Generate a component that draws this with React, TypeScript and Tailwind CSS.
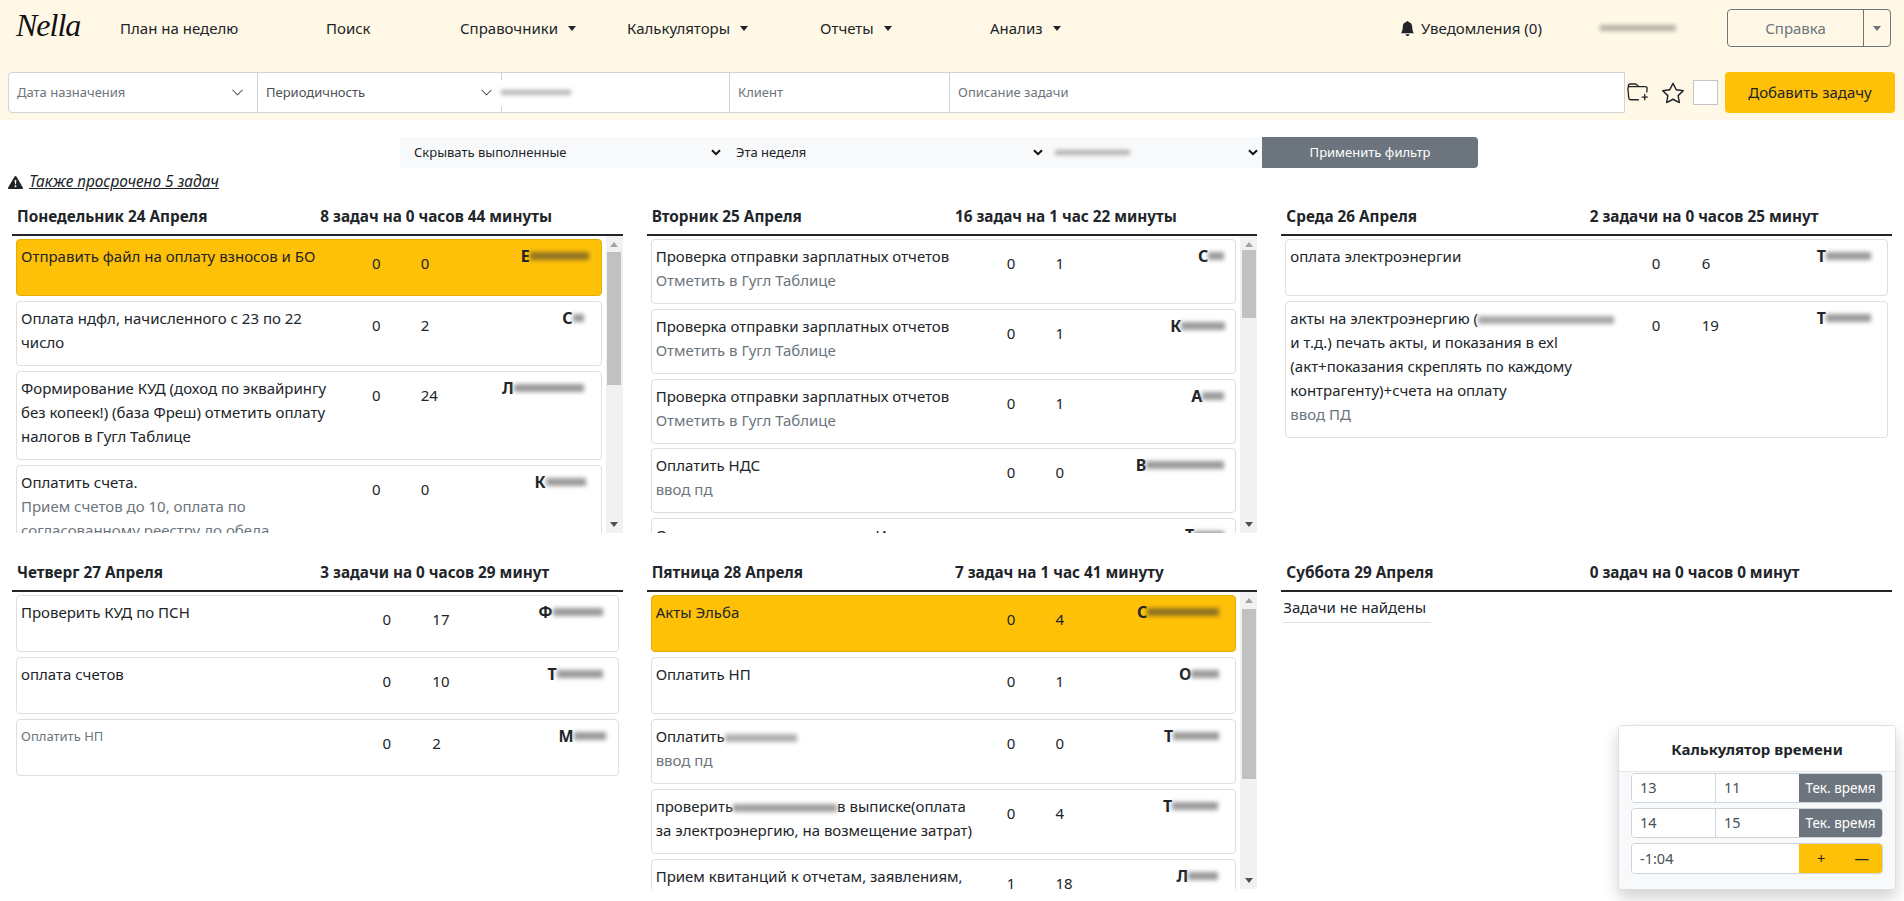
import React from "react";
import { BsBellFill, BsChevronDown, BsExclamationTriangleFill, BsFolderPlus, BsStar } from "react-icons/bs";

function Blur({ w, tone = "#8a8a8a", h = 8 }: { w: number; tone?: string; h?: number }) {
  return (
    <span className="inline-block align-middle blur-[2px]" style={{ width: w, height: h, backgroundColor: tone }} />
  );
}

type Who = { l: string; w: number; pr: number };
type Task = {
  id: string;
  title: React.ReactNode;
  sub?: string;
  a: string;
  b: string;
  who: Who;
  hot?: boolean;
  small?: boolean;
};
type Day = { name: string; stat: string; tasks: Task[]; thumb?: [number, number]; empty?: boolean };

const check = (id: string, l: string, w: number, pr: number): Task => ({
  id,
  title: "Проверка отправки зарплатных отчетов",
  sub: "Отметить в Гугл Таблице",
  a: "0",
  b: "1",
  who: { l, w, pr },
});

const days: Day[] = [
  {
    name: "Понедельник 24 Апреля",
    stat: "8 задач на 0 часов 44 минуты",
    thumb: [16, 133],
    tasks: [
      { id: "m1", title: "Отправить файл на оплату взносов и БО", a: "0", b: "0", who: { l: "Е", w: 59, pr: 7 }, hot: true },
      { id: "m2", title: "Оплата ндфл, начисленного с 23 по 22 число", a: "0", b: "2", who: { l: "С", w: 11, pr: 12 } },
      { id: "m3", title: "Формирование КУД (доход по эквайрингу без копеек!) (база Фреш) отметить оплату налогов в Гугл Таблице", a: "0", b: "24", who: { l: "Л", w: 70, pr: 12 } },
      { id: "m4", title: "Оплатить счета.", sub: "Прием счетов до 10, оплата по согласованному реестру до обеда", a: "0", b: "0", who: { l: "К", w: 40, pr: 10 } },
    ],
  },
  {
    name: "Вторник 25 Апреля",
    stat: "16 задач на 1 час 22 минуты",
    thumb: [14, 68],
    tasks: [
      check("t1", "С", 16, 6),
      check("t2", "К", 44, 5),
      check("t3", "А", 22, 6),
      { id: "t4", title: "Оплатить НДС", sub: "ввод пд", a: "0", b: "0", who: { l: "В", w: 78, pr: 6 } },
      { id: "t5", title: "Оплатить счета поставщикам Ип", a: "0", b: "0", who: { l: "Т", w: 30, pr: 6 } },
    ],
  },
  {
    name: "Среда 26 Апреля",
    stat: "2 задачи на 0 часов 25 минут",
    tasks: [
      { id: "w1", title: "оплата электроэнергии", a: "0", b: "6", who: { l: "Т", w: 45, pr: 11 } },
      {
        id: "w2",
        title: (
          <>
            акты на электроэнергию (<Blur w={136} tone="#a8a8a8" />
            <br />и т.д.) печать акты, и показания в exl (акт+показания скреплять по каждому контрагенту)+счета на оплату
          </>
        ),
        sub: "ввод ПД",
        a: "0",
        b: "19",
        who: { l: "Т", w: 45, pr: 11 },
      },
    ],
  },
  {
    name: "Четверг 27 Апреля",
    stat: "3 задачи на 0 часов 29 минут",
    tasks: [
      { id: "h1", title: "Проверить КУД по ПСН", a: "0", b: "17", who: { l: "Ф", w: 50, pr: 10 } },
      { id: "h2", title: "оплата счетов", a: "0", b: "10", who: { l: "Т", w: 46, pr: 10 } },
      { id: "h3", title: "Оплатить НП", a: "0", b: "2", who: { l: "М", w: 32, pr: 7 }, small: true },
    ],
  },
  {
    name: "Пятница 28 Апреля",
    stat: "7 задач на 1 час 41 минуту",
    thumb: [17, 170],
    tasks: [
      { id: "f1", title: "Акты Эльба", a: "0", b: "4", who: { l: "С", w: 72, pr: 11 }, hot: true },
      { id: "f2", title: "Оплатить НП", a: "0", b: "1", who: { l: "О", w: 28, pr: 11 } },
      {
        id: "f3",
        title: (
          <>
            Оплатить
            <Blur w={72} tone="#b0b0b0" />
          </>
        ),
        sub: "ввод пд",
        a: "0",
        b: "0",
        who: { l: "Т", w: 46, pr: 11 },
      },
      {
        id: "f4",
        title: (
          <>
            проверить
            <Blur w={104} tone="#a0a0a0" />в выписке(оплата за электроэнергию, на возмещение затрат)
          </>
        ),
        a: "0",
        b: "4",
        who: { l: "Т", w: 46, pr: 12 },
      },
      { id: "f5", title: "Прием квитанций к отчетам, заявлениям, расчетам", a: "1", b: "18", who: { l: "Л", w: 30, pr: 12 } },
    ],
  },
  { name: "Суббота 29 Апреля", stat: "0 задач на 0 часов 0 минут", tasks: [], empty: true },
];

function Card({ t }: { t: Task }) {
  return (
    <div
      className={`flex min-h-[57.2px] shrink-0 rounded border pt-1 pr-[5px] pb-[11px] pl-1 text-[15px] leading-6 ${
        t.hot ? "border-[#e6ad06] bg-[#ffc107]" : "border-[#dfdfdf] bg-white"
      } text-[#212529]`}
    >
      <div className="w-[56%]">
        <div className={t.small ? "text-[13px] text-[#6c757d]" : ""}>{t.title}</div>
        {t.sub && <div className="text-[#6c757d]">{t.sub}</div>}
      </div>
      <div className="w-[12%] pt-[7px] pr-[2px] text-center">{t.a}</div>
      <div className="w-[10%] pt-[7px] pl-[9px]">{t.b}</div>
      <div className="flex flex-1 items-start justify-end">
        <span className="flex items-center text-[16px] font-bold" style={{ paddingRight: t.who.pr }}>
          {t.who.l}
          <Blur w={t.who.w} tone={t.hot ? "#8f7322" : "#9a9a9a"} />
        </span>
      </div>
    </div>
  );
}

function Scrollbar({ top, height }: { top: number; height: number }) {
  return (
    <div className="flex w-[17px] shrink-0 flex-col items-center bg-[#f1f1f1]">
      <div className="mt-[6px] h-0 w-0 border-x-[4px] border-b-[5px] border-x-transparent border-b-[#a3a3a3]" />
      <div className="w-[14px] bg-[#c1c1c1]" style={{ marginTop: top - 11, height }} />
      <div className="mt-auto mb-[6px] h-0 w-0 border-x-[4px] border-t-[5px] border-x-transparent border-t-[#505050]" />
    </div>
  );
}

function Column({ d }: { d: Day }) {
  return (
    <div>
      <div className="flex h-9 items-center px-[5px] text-[15.3px] font-bold text-[#212529]">
        <div className="w-1/2">{d.name}</div>
        <div className="w-1/2 pl-[3px]">{d.stat}</div>
      </div>
      <div className="h-[2px] bg-[#212529]" />
      <div className="flex h-[297px] overflow-hidden">
        <div className="flex flex-1 flex-col gap-[4.8px] overflow-hidden px-1 pt-[3px]">
          {d.tasks.map((t) => (
            <Card key={t.id} t={t} />
          ))}
          {d.empty && (
            <div className="-ml-[2px] w-[148px] border-b border-[#dfdfdf] pb-[3px] text-[15px] leading-6 text-[#212529]">
              Задачи не найдены
            </div>
          )}
        </div>
        {d.thumb && <Scrollbar top={d.thumb[0]} height={d.thumb[1]} />}
      </div>
    </div>
  );
}

const NavItem = ({ w, children, caret }: { w: number; children: React.ReactNode; caret?: boolean }) => (
  <div className="flex shrink-0 items-center" style={{ width: w }}>
    <span>{children}</span>
    {caret && <span className="ml-[10px] h-0 w-0 border-x-[4px] border-t-[5px] border-x-transparent border-t-[#212529]" />}
  </div>
);

const Nav = () => (
  <div className="flex h-[72px] items-start pt-4 text-[15px] leading-6 text-[#212529]">
    <div className="w-[120px] shrink-0 pl-4">
      <span className="-mt-[13px] block font-['Liberation_Serif',serif] text-[32px] leading-[44px] tracking-[-1px] text-[#111] italic">
        Nella
      </span>
    </div>
    <NavItem w={206}>План на неделю</NavItem>
    <NavItem w={134}>Поиск</NavItem>
    <NavItem w={167} caret>
      Справочники
    </NavItem>
    <NavItem w={193} caret>
      Калькуляторы
    </NavItem>
    <NavItem w={170} caret>
      Отчеты
    </NavItem>
    <NavItem w={410} caret>
      Анализ
    </NavItem>
    <div className="flex w-[198px] shrink-0 items-center gap-[6px]">
      <BsBellFill className="text-[15px]" />
      <span>Уведомления (0)</span>
    </div>
    <div className="flex h-6 w-[129px] shrink-0 items-center pl-[2px]">
      <Blur w={76} tone="#b3b0a6" h={6} />
    </div>
    <div className="-mt-[7px] flex h-[38px] w-[164px] shrink-0 rounded border border-[#6c757d] text-[#6c757d]">
      <div className="flex flex-1 items-center justify-center text-[15px]">Справка</div>
      <div className="flex w-[27px] items-center justify-center border-l border-[#6c757d]">
        <span className="h-0 w-0 border-x-[4px] border-t-[5px] border-x-transparent border-t-[#6c757d]" />
      </div>
    </div>
  </div>
);

const TaskForm = () => (
  <div className="flex h-[41px] items-stretch pl-2 text-[13px] text-[#6c757d]">
    <div className="flex w-[1617px] shrink-0 rounded-l border border-[#ced4da] bg-white">
      <div className="flex w-[249px] items-center justify-between border-r border-[#ced4da] pr-[13px] pl-[8px]">
        <span>Дата назначения</span>
        <BsChevronDown className="text-[13px] text-[#343a40]" />
      </div>
      <div className="flex w-[244px] items-center justify-between border-r border-[#ced4da] pr-[8px] pl-[8px] text-[#495057]">
        <span>Периодичность</span>
        <BsChevronDown className="text-[13px] text-[#343a40]" />
      </div>
      <div className="flex w-[228px] items-center border-r border-[#ced4da]">
        <div className="-ml-[1px] flex h-[26px] w-[72px] items-center bg-white">
          <Blur w={70} tone="#b5b5b5" h={5} />
        </div>
      </div>
      <div className="flex w-[220px] items-center border-r border-[#ced4da] pl-[8px]">Клиент</div>
      <div className="flex flex-1 items-center pl-[8px]">Описание задачи</div>
    </div>
    <div className="flex w-[23px] shrink-0 items-center justify-end">
      <BsFolderPlus className="text-[21px] text-[#212529]" />
    </div>
    <div className="flex w-[36px] shrink-0 items-center justify-end">
      <BsStar className="text-[22px] text-[#212529]" />
    </div>
    <div className="ml-[9px] h-[25px] w-[25px] shrink-0 self-center border border-[#c4c4c4] bg-white" />
    <button className="ml-[7px] h-[41px] w-[170px] shrink-0 rounded bg-[#ffc107] text-[15px] text-[#212529]">
      Добавить задачу
    </button>
  </div>
);

const NativeChevron = () => (
  <svg width="10" height="7" viewBox="0 0 10 7" className="shrink-0">
    <path d="M1 1.2 5 5.2 9 1.2" fill="none" stroke="#111" strokeWidth="2" />
  </svg>
);

const FilterBar = () => (
  <div className="mt-[17px] ml-[400px] flex h-[31px] w-[1078px] text-[13px] text-[#212529]">
    <div className="flex w-[328px] items-center justify-between bg-[#f8f9fa] pr-[7px] pl-[14px]">
      <span>Скрывать выполненные</span>
      <NativeChevron />
    </div>
    <div className="flex w-[317px] items-center justify-between bg-[#f8f9fa] pr-[2px] pl-[8px]">
      <span>Эта неделя</span>
      <NativeChevron />
    </div>
    <div className="flex w-[217px] items-center justify-between bg-[#f8f9fa] pr-[4px] pl-[10px]">
      <Blur w={75} tone="#b0b0b0" h={5} />
      <NativeChevron />
    </div>
    <button className="flex-1 rounded-r bg-[#6c757d] text-[13px] text-white">Применить фильтр</button>
  </div>
);

const Calc = () => (
  <div className="fixed right-2 bottom-[11px] h-[165px] w-[278px] overflow-hidden rounded border border-[#dfdfdf] bg-[#f8f9fa] shadow-[0_8px_16px_rgba(0,0,0,0.18)]">
    <div className="flex h-[46px] items-center justify-center border-b border-[#e5e5e5] bg-white pt-[1px] text-[15px] font-bold text-[#212529]">
      Калькулятор времени
    </div>
    <div className="mt-px flex flex-col gap-[5px] px-[12px] text-[14.5px] text-[#495057]">
      <div className="flex h-[30px] overflow-hidden rounded border border-[#ced4da]">
        <div className="flex w-[84px] items-center border-r border-[#ced4da] bg-white pl-2">13</div>
        <div className="flex w-[83px] items-center bg-white pl-2">11</div>
        <div className="flex flex-1 items-center justify-center bg-[#6c757d] text-[13.5px] text-white">Тек. время</div>
      </div>
      <div className="flex h-[30px] overflow-hidden rounded border border-[#ced4da]">
        <div className="flex w-[84px] items-center border-r border-[#ced4da] bg-white pl-2">14</div>
        <div className="flex w-[83px] items-center bg-white pl-2">15</div>
        <div className="flex flex-1 items-center justify-center bg-[#6c757d] text-[13.5px] text-white">Тек. время</div>
      </div>
      <div className="flex h-[31px] overflow-hidden rounded border border-[#ced4da]">
        <div className="flex w-[167px] items-center bg-white pl-2">-1:04</div>
        <div className="flex flex-1 items-center justify-between bg-[#ffc107] pr-[13px] pl-[18px] text-[#212529]">
          <span>+</span>
          <span>—</span>
        </div>
      </div>
    </div>
  </div>
);

export default function App() {
  return (
    <div className="relative h-[901px] overflow-hidden bg-white font-['Noto_Sans',sans-serif]">
      <div className="h-[120px] bg-[#fff8e6]">
        <Nav />
        <TaskForm />
      </div>
      <FilterBar />
      <div className="flex h-[30px] items-center gap-[6px] pb-[6px] pl-2 pt-[4px] text-[#212529]">
        <BsExclamationTriangleFill className="text-[15px]" />
        <span className="text-[15.4px] italic underline">Также просрочено 5 задач</span>
      </div>
      <div className="grid grid-cols-3 gap-x-6 gap-y-[21px] px-3">
        {days.map((d) => (
          <Column key={d.name} d={d} />
        ))}
      </div>
      <Calc />
    </div>
  );
}
